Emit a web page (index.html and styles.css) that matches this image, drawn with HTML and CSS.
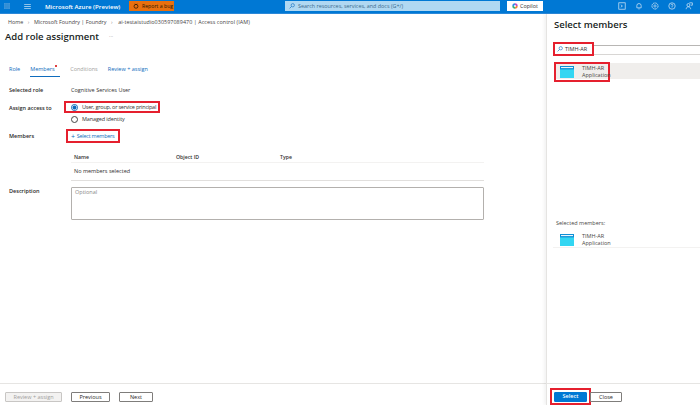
FILE: index.html
```html
<!DOCTYPE html>
<html lang="en">
<head>
<meta charset="utf-8">
<title>Add role assignment</title>
<link rel="stylesheet" href="styles.css">
</head>
<body>
<header class="topbar">
  <div class="top-left">
    <svg class="tb-ico portal" viewBox="0 0 8 8"><rect width="8" height="8" fill="#3f97dc"/><path d="M2.6 0v8M5.3 0v8M0 2.6h8M0 5.3h8" stroke="#1f80cc" stroke-width=".5"/></svg>
    <svg class="tb-ico menu" viewBox="0 0 8 6"><path d="M0 .5h8M0 3h8M0 5.5h8" stroke="#cfe5f6" stroke-width=".9"/></svg>
    <span class="brand">Microsoft Azure (Preview)</span>
    <span class="bug"><svg class="bug-ico" viewBox="0 0 8 8"><circle cx="4" cy="4.4" r="2.6" fill="none" stroke="#2b1600" stroke-width="1"/><path d="M2.5 1l1 1.2M5.5 1l-1 1.2" stroke="#2b1600" stroke-width=".8"/></svg>Report a bug</span>
  </div>
  <div class="search"><svg class="search-ico" viewBox="0 0 8 8"><circle cx="5" cy="3" r="2.2" fill="none" stroke="#0f6cbd" stroke-width=".8"/><path d="M3.4 4.6L.8 7.2" stroke="#0f6cbd" stroke-width=".9"/></svg>Search resources, services, and docs (G+/)</div>
  <span class="copilot"><svg class="cp-ico" viewBox="0 0 8 8"><path d="M4 .4A3.6 3.6 0 0 0 .4 4H4z" fill="#2f8fe8"/><path d="M4 .4A3.6 3.6 0 0 1 7.6 4H4z" fill="#c44fc0"/><path d="M7.6 4A3.6 3.6 0 0 1 4 7.6V4z" fill="#f0883e"/><path d="M4 7.6A3.6 3.6 0 0 1 .4 4H4z" fill="#35b37e"/><circle cx="4" cy="4" r="1.3" fill="#fff"/></svg>Copilot</span>
  <nav class="top-icons">
    <svg class="ti" viewBox="0 0 10 10"><rect x="1" y="1" width="8" height="8" fill="none" stroke="#d5e8f7" stroke-width=".9"/><path d="M3.5 3.5L5.5 5 3.5 6.5" fill="none" stroke="#d5e8f7" stroke-width=".9"/></svg>
    <svg class="ti" viewBox="0 0 10 10"><path d="M2.3 7.3V4.6a2.7 2.7 0 0 1 5.4 0v2.7zM4.2 8.6h1.6" fill="none" stroke="#d5e8f7" stroke-width=".9"/></svg>
    <svg class="ti" viewBox="0 0 10 10"><circle cx="5" cy="5" r="3.8" fill="none" stroke="#d5e8f7" stroke-width="1.1" stroke-dasharray="1.6 .5"/><circle cx="5" cy="5" r="1.4" fill="none" stroke="#d5e8f7" stroke-width=".8"/></svg>
    <svg class="ti" viewBox="0 0 10 10"><circle cx="5" cy="5" r="4" fill="none" stroke="#d5e8f7" stroke-width=".9"/><path d="M3.8 4a1.2 1.2 0 1 1 1.7 1.1C5.1 5.3 5 5.6 5 6.2M5 7v.7" fill="none" stroke="#d5e8f7" stroke-width=".9"/></svg>
    <svg class="ti" viewBox="0 0 10 10"><path d="M1.5 9c0-2 1.2-3 2.8-3s2.8 1 2.8 3" fill="none" stroke="#d5e8f7" stroke-width=".9"/><circle cx="4.3" cy="3.8" r="1.9" fill="none" stroke="#d5e8f7" stroke-width=".9"/><path d="M5.5 1h3.7v3H7.5" fill="none" stroke="#d5e8f7" stroke-width=".9"/></svg>
  </nav>
</header>

<div class="shell">
  <main class="content">
    <div class="content-body">
      <div class="crumbs"><span>Home</span><span class="sep">›</span><span>Microsoft Foundry | Foundry</span><span class="sep">›</span><span class="crumb-last">ai-testaistudio030597089470 | Access control (IAM)</span></div>
      <div class="title-row"><h1>Add role assignment</h1><span class="more">···</span></div>
      <div class="tabs">
        <span class="tab">Role</span>
        <span class="tab active">Members<i class="star"></i></span>
        <span class="tab off">Conditions</span>
        <span class="tab">Review + assign</span>
      </div>
      <div class="field f-role"><span class="label">Selected role</span><span>Cognitive Services User</span></div>
      <div class="field f-access">
        <span class="label">Assign access to</span>
        <div class="radios">
          <div class="mark mark-radio"><span class="radio on"></span><span>User, group, or service principal</span></div>
          <div class="radio-row"><span class="radio"></span><span>Managed identity</span></div>
        </div>
      </div>
      <div class="field f-members">
        <span class="label">Members</span>
        <div class="mark mark-select"><span class="plus">+</span><span class="link">Select members</span></div>
      </div>
      <div class="table">
        <div class="thead"><span class="c1">Name</span><span class="c2">Object ID</span><span>Type</span></div>
        <div class="tbody">No members selected</div>
      </div>
      <div class="field f-desc">
        <span class="label">Description</span>
        <div class="textarea">Optional</div>
      </div>
    </div>
    <footer class="foot">
      <span class="btn disabled">Review + assign</span>
      <span class="btn prev">Previous</span>
      <span class="btn next">Next</span>
    </footer>
  </main>

  <aside class="panel">
    <div class="panel-body">
      <h2>Select members</h2>
      <div class="pick-search">
        <div class="mark mark-search"><svg class="search-ico" viewBox="0 0 8 8"><circle cx="5" cy="3" r="2.2" fill="none" stroke="#0f6cbd" stroke-width=".8"/><path d="M3.4 4.6L.8 7.2" stroke="#0f6cbd" stroke-width=".9"/></svg><span>TIMH-AR</span></div>
      </div>
      <div class="result">
        <div class="mark mark-result">
          <svg class="app" viewBox="0 0 14 12"><rect width="14" height="12" fill="#33d6f2"/><rect width="14" height="3.4" fill="#0f8fd6"/><rect x="1" y="1" width="12" height="1.1" fill="#e8f7fd"/></svg>
          <div class="who"><span>TIMH-AR</span><span>Application</span></div>
        </div>
      </div>
      <div class="sel-title">Selected members:</div>
      <div class="sel-item">
        <svg class="app" viewBox="0 0 14 12"><rect width="14" height="12" fill="#33d6f2"/><rect width="14" height="3.4" fill="#0f8fd6"/><rect x="1" y="1" width="12" height="1.1" fill="#e8f7fd"/></svg>
        <div class="who"><span>TIMH-AR</span><span>Application</span></div>
      </div>
    </div>
    <footer class="foot panel-foot">
      <div class="mark mark-btn"><span class="btn primary">Select</span></div>
      <span class="btn close">Close</span>
    </footer>
  </aside>
</div>
</body>
</html>
```
FILE: styles.css
```css
* { box-sizing: border-box; }
html, body { margin: 0; height: 100%; }
body {
  width: 700px; height: 405px; overflow: hidden; background: #fff; color: #323130;
  font: 5.5px/7px "Open Sans", "Noto Sans", sans-serif;
  display: flex; flex-direction: column;
}
.topbar {
  height: 14px; flex: none; background: #0078d4; border-bottom: 1px solid #2b88d8;
  display: flex; align-items: flex-start; color: #fff;
}
.top-left { width: 285px; height: 12px; display: flex; align-items: center; flex: none; }
.tb-ico { display: block; flex: none; }
.portal { width: 6px; height: 6px; margin-left: 4px; }
.menu { width: 7px; height: 5px; margin-left: 14px; }
.brand { margin-left: 14px; font-size: 6.1px; font-weight: 600; white-space: nowrap; width: 84px; flex: none; }
.bug {
  width: 45px; height: 10px; background: #e8700f; color: #2b1600; display: flex; align-items: center;
  padding-left: 4px; gap: 3px; white-space: nowrap; font-size: 5.2px; flex: none;
}
.bug-ico { width: 6px; height: 6px; flex: none; }
.search {
  width: 215px; height: 10px; margin-top: 1px; background: #b0d8f2; color: #3b6a8d; flex: none;
  display: flex; align-items: center; padding-left: 4px; gap: 3px; white-space: nowrap; font-size: 5.4px;
}
.search-ico { width: 6px; height: 6px; flex: none; }
.copilot {
  width: 36px; height: 10px; margin: 1px 0 0 7px; background: #fff; color: #323130; flex: none;
  display: flex; align-items: center; padding-left: 5px; gap: 2px; font-size: 5.4px;
}
.cp-ico { width: 6px; height: 6px; flex: none; }
.top-icons { margin-left: 75px; margin-top: 2px; display: flex; gap: 8.7px; }
.ti { width: 8px; height: 8px; display: block; flex: none; }

.shell { flex: 1; display: flex; min-height: 0; }
.content { width: 546px; flex: none; display: flex; flex-direction: column; }
.content-body { flex: 1; padding: 4px 0 0 5px; }
.crumbs { height: 8px; display: flex; gap: 4.5px; padding-left: 3px; white-space: nowrap; font-size: 5.4px; color: #44423f; align-items: center; }
.crumb-last { letter-spacing: .06px; margin-left: 1px; }
.sep { color: #8a8886; }
.title-row { height: 15px; margin-top: 3px; display: flex; align-items: center; }
h1 { margin: 0; font-size: 9.5px; line-height: 15px; font-weight: 600; color: #201f1e; white-space: nowrap; }
.more { margin-left: 10px; color: #8a8886; font-size: 5px; }
.tabs { display: flex; margin: 19px 0 0 4px; height: 15px; gap: 10px; }
.tab { color: #0f6cbd; position: relative; height: 14px; padding-top: 3px; white-space: nowrap; }
.tab.active { color: #0f6cbd; border-bottom: 1px solid #0f6cbd; width: 30px; font-weight: 500; margin-right: -1px; }
.tab.off { color: #a19f9d; margin-left: 1px; }
.star { position: absolute; right: 3px; top: 2px; width: 2px; height: 2px; background: #d40000; border-radius: 50%; }

.field { display: flex; padding-left: 4px; }
.label { width: 62px; flex: none; font-weight: 600; color: #292827; white-space: nowrap; }
.f-role { margin-top: 9px; height: 7px; }
.f-access { margin-top: 7px; height: 24px; }
.f-access .label { padding-top: 4px; }
.radios { margin-left: -7px; }
.mark { border: 2px solid #e5202e; display: flex; align-items: center; }
.mark-radio { width: 96px; height: 12px; padding-left: 5px; gap: 4px; white-space: nowrap; letter-spacing: -.22px; }
.radio-row { display: flex; align-items: center; gap: 4px; padding-left: 7px; height: 10px; margin-top: 1px; white-space: nowrap; letter-spacing: -.12px; }
.radio { width: 7px; height: 7px; border-radius: 50%; border: .8px solid #444; flex: none; background: #fff; }
.radio.on { border-color: #0f6cbd; background: radial-gradient(circle, #0f6cbd 0 1.8px, #fff 2.2px); }
.f-members { margin-top: 4px; height: 14px; }
.f-members .label { padding-top: 4px; }
.mark-select { width: 54px; height: 14px; margin-left: -5px; padding-left: 3px; gap: 2px; white-space: nowrap; letter-spacing: -.25px; }
.plus { color: #0f6cbd; font-size: 7px; }
.link { color: #0f6cbd; }
.table { margin: 11px 0 0 66px; width: 413px; }
.thead { height: 9px; display: flex; padding-left: 3px; font-weight: 600; border-bottom: 1px solid #f3f2f1; font-size: 5.2px; color: #323130; }
.thead .c1 { width: 102px; }
.thead .c2 { width: 104px; }
.tbody { height: 18px; padding: 5px 0 0 3px; border-bottom: 1px solid #e1dfdd; }
.f-desc { margin-top: 6px; height: 33px; }
.f-desc .label { padding-top: 1px; }
.textarea { width: 413px; height: 33px; border: 1px solid #b3b0ad; border-radius: 1px; padding: 1px 3px; color: #8a8886; }

.foot { height: 22px; flex: none; border-top: 1px solid #e6e5e3; display: flex; align-items: flex-start; padding-top: 8px; }
.btn { height: 10px; display: flex; align-items: center; justify-content: center; border: 1px solid #7f7d7b; border-radius: 1px; flex: none; white-space: nowrap; color: #292827; background: #fff; }
.disabled { width: 57px; margin-left: 5px; background: #f3f2f1; border-color: #c8c6c4; color: #a19f9d; }
.prev { width: 39px; margin-left: 9px; }
.next { width: 34px; margin-left: 9px; }

.panel { flex: 1; min-width: 0; border-left: 1px solid #e5e4e2; box-shadow: -2px 0 3px rgba(0,0,0,.05); display: flex; flex-direction: column; }
.panel-body { flex: 1; padding-left: 6px; min-height: 0; }
h2 { margin: 0; padding: 4px 0 0 1px; height: 28px; font-size: 9.5px; line-height: 13px; font-weight: 600; color: #201f1e; white-space: nowrap; }
.pick-search { height: 14px; display: flex; align-items: center; background: linear-gradient(#fff 3px, #b8b6b4 3px, #b8b6b4 4px, #fff 4px, #fff 12px, #d8d6d4 12px, #d8d6d4 13px, #fff 13px); }
.mark-search { width: 41px; height: 14px; background: #fff; padding-left: 2px; gap: 2px; color: #323130; white-space: nowrap; }
.result { margin-top: 6px; margin-left: 1px; height: 20px; background: linear-gradient(#fff 1px, #f0eeec 1px, #f0eeec 17px, #fff 17px); }
.mark-result { width: 56px; height: 20px; gap: 8px; padding-left: 4px; }
.app { width: 14px; height: 12px; flex: none; display: block; }
.who { display: flex; flex-direction: column; line-height: 7.5px; color: #4a4846; white-space: nowrap; }
.sel-title { margin-top: 138px; padding-left: 3px; height: 7px; white-space: nowrap; color: #4a4846; }
.sel-item { margin-top: 6px; height: 15px; display: flex; align-items: center; gap: 8px; padding-left: 7px; border-bottom: 1px solid #f3f2f1; }
.panel-foot { padding: 4px 0 0 3px; }
.mark-btn { width: 41px; height: 17px; justify-content: center; }
.primary { width: 33px; background: #0078d4; border-color: #0078d4; color: #fff; font-weight: 600; }
.close { width: 32px; margin: 4px 0 0 -1px; }
```
